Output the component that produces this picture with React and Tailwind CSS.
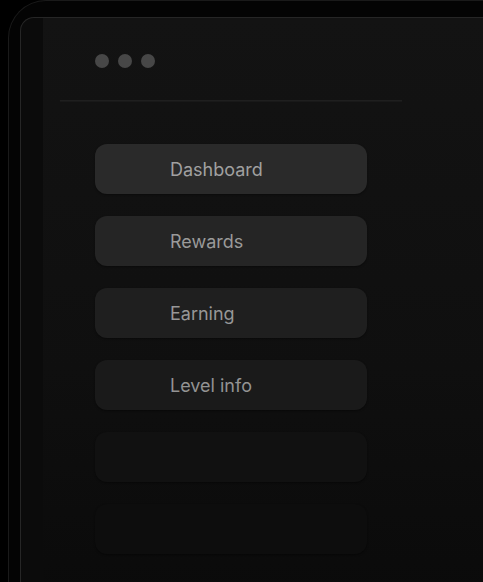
export default function App() {
  const items = [
    { label: "Dashboard", bg: "bg-[#2a2a2a]", text: "text-[#a0a0a0]" },
    { label: "Rewards", bg: "bg-[#252525]", text: "text-[#9a9a9a]" },
    { label: "Earning", bg: "bg-[#1f1f1f]", text: "text-[#979797]" },
    { label: "Level info", bg: "bg-[#1a1a1a]", text: "text-[#939393]" },
    { label: "", bg: "bg-[#111111]", text: "" },
    { label: "", bg: "bg-[#0d0d0d]", text: "" },
  ];
  return (
    <div
      className="w-[483px] h-[582px] overflow-hidden bg-black pl-[8px]"
      style={{ fontFamily: "Inter, 'Noto Sans', sans-serif" }}
    >
      <div className="h-[700px] rounded-tl-[38px] border-l border-t border-[#1a1a1a] bg-[#040404] pt-[16px] pl-[11px]">
        <div className="h-[700px] rounded-tl-[14px] border-l border-t border-[#262626] bg-[#0b0b0b] pl-[22px]">
          <div className="h-[700px] bg-gradient-to-b from-[#131313] via-[#0f0f0f] to-[#080808] w-[460px]">
            <div className="w-[376px] flex flex-col">
              <div className="flex gap-[9px] pl-[52px] pt-[36px]">
                <span className="w-[14px] h-[14px] rounded-full bg-[#474747]" />
                <span className="w-[14px] h-[14px] rounded-full bg-[#474747]" />
                <span className="w-[14px] h-[14px] rounded-full bg-[#474747]" />
              </div>
              <div className="ml-[17px] mr-[17px] mt-[32px] h-[2px] border-t border-[#1f1f1f] bg-[#191919]" />
              <div className="flex flex-col gap-[22px] pl-[52px] pt-[42px]">
                {items.map((it, i) => (
                  <div
                    key={i}
                    className={`w-[272px] h-[50px] rounded-[12px] ${it.bg} flex items-center pl-[75px] shadow-[0_1px_2px_rgba(0,0,0,0.4)]`}
                  >
                    <span className={`text-[18px] ${it.text}`}>{it.label}</span>
                  </div>
                ))}
              </div>
            </div>
          </div>
        </div>
      </div>
    </div>
  );
}
